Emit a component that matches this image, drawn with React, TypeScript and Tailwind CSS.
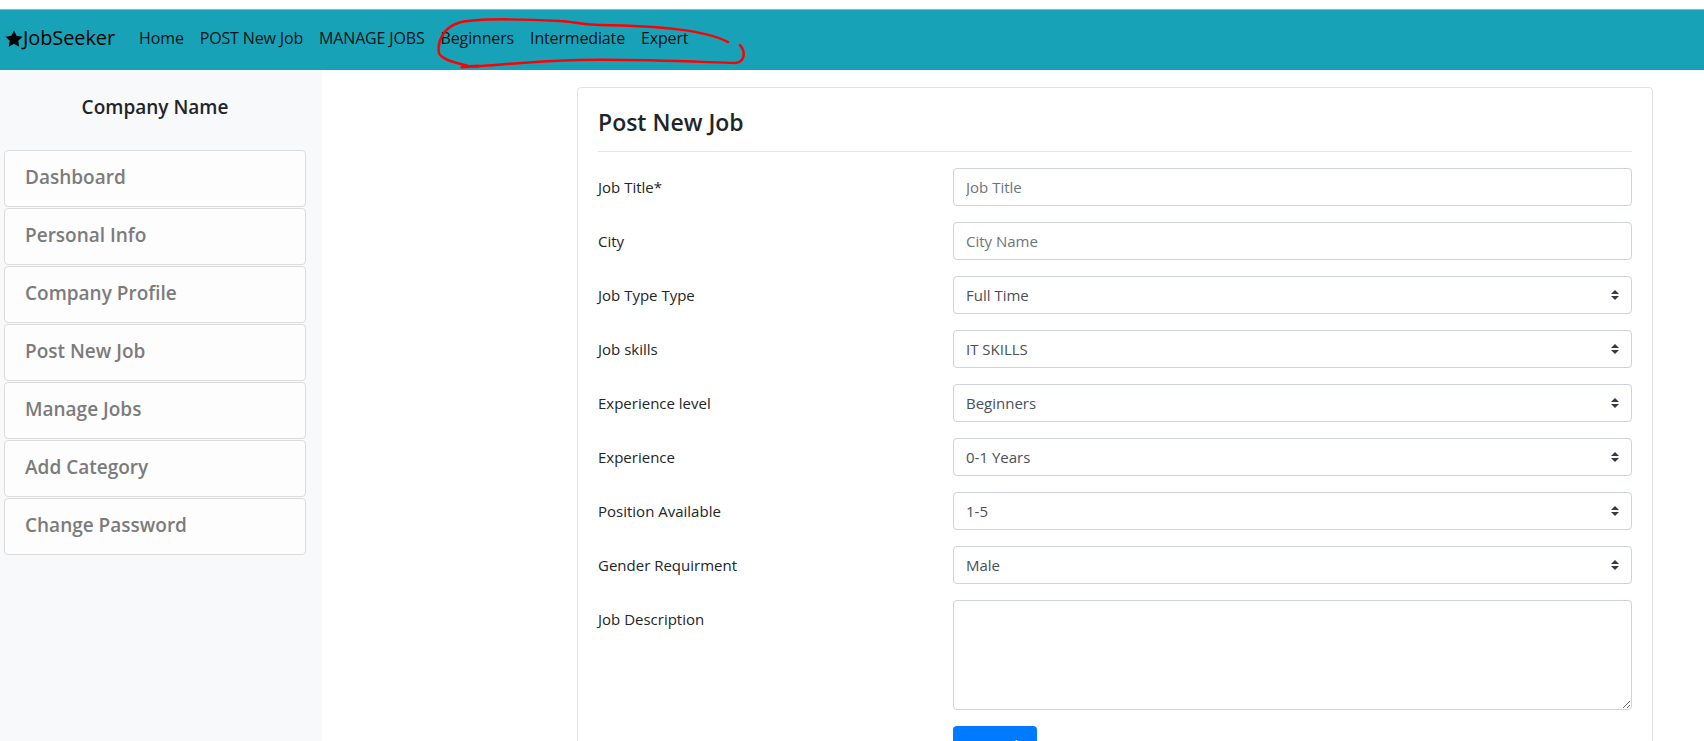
import React from "react";

function SelectArrows() {
  return (
    <svg width="8" height="10" viewBox="0 0 4 5" className="shrink-0">
      <path fill="#343a40" d="M2 0L0 2h4zm0 5L0 3h4z" />
    </svg>
  );
}

function Star() {
  return (
    <svg width="18" height="17" viewBox="0 0 24 23" className="shrink-0">
      <path
        fill="#000"
        d="M12 0.6l3.5 7.3 8 1.1-5.8 5.6 1.4 7.9L12 18.7l-7.1 3.8 1.4-7.9L0.5 9l8-1.1z"
      />
    </svg>
  );
}

const navLinks = ["Home", "POST New Job", "MANAGE JOBS", "Beginners", "Intermediate", "Expert"];
const sideItems = [
  "Dashboard",
  "Personal Info",
  "Company Profile",
  "Post New Job",
  "Manage Jobs",
  "Add Category",
  "Change Password",
];

type Field =
  | { label: string; kind: "input"; placeholder: string }
  | { label: string; kind: "select"; value: string };

const fields: Field[] = [
  { label: "Job Title*", kind: "input", placeholder: "Job Title" },
  { label: "City", kind: "input", placeholder: "City Name" },
  { label: "Job Type Type", kind: "select", value: "Full Time" },
  { label: "Job skills", kind: "select", value: "IT SKILLS" },
  { label: "Experience level", kind: "select", value: "Beginners" },
  { label: "Experience", kind: "select", value: "0-1 Years" },
  { label: "Position Available", kind: "select", value: "1-5" },
  { label: "Gender Requirment", kind: "select", value: "Male" },
];

export default function App() {
  return (
    <div className="relative min-h-screen bg-white font-['Open_Sans','Noto_Sans',sans-serif] text-[#212529]">
      {/* top strip */}
      <div className="h-[9px] bg-white" />
      <nav className="flex h-[61px] items-center border-t border-[#adadad] bg-[#17a2b8] pb-[4px] pl-[5px]">
        <a className="mr-[16px] flex items-center text-[20px] leading-none text-black">
          <Star />
          <span className="tracking-[-0.1px]">JobSeeker</span>
        </a>
        <div className="flex items-center">
          {navLinks.map((l) => (
            <span key={l} className="px-[8px] text-[16px] leading-none tracking-[-0.15px] text-black/90">
              {l}
            </span>
          ))}
        </div>
      </nav>

      <div className="flex">
        {/* sidebar */}
        <aside className="w-[322px] shrink-0 self-stretch bg-[#f8f9fa] pl-[4px] pr-[16px]">
          <div className="flex h-[80px] items-center justify-center pb-[6px] text-[19px] font-semibold">
            Company Name
          </div>
          <div className="flex flex-col gap-[1px]">
            {sideItems.map((s) => (
              <div
                key={s}
                className="flex h-[57px] items-center rounded-[4px] border border-[#dcdcdc] bg-[#fdfdfd] px-[20px] pb-[3px] text-[19px] font-semibold text-[#7b7b7b]"
              >
                {s}
              </div>
            ))}
          </div>
        </aside>

        {/* main */}
        <main className="flex-1 pl-[255px] pr-[51px] pt-[17px]">
          <div className="rounded-[4px] border border-[#dfe1e4] px-[20px] pt-[20px] pb-[20px]">
            <h4 className="text-[23px] font-semibold leading-[29px] mb-[8px]">Post New Job</h4>
            <div className="mt-[14px] mb-[16px] border-t border-[#e5e5e5]" />
            <div className="flex flex-col">
              {fields.map((f) => (
                <div key={f.label} className="mb-[16px] flex">
                  <div className="w-[355px] shrink-0 pt-[7px] text-[15px] leading-[24px]">{f.label}</div>
                  <div className="flex-1">
                    {f.kind === "input" ? (
                      <input
                        className="block h-[38px] w-full rounded-[4px] border border-[#ced4da] px-[12px] text-[15px] text-[#495057] outline-none placeholder:text-[#6c757d]"
                        placeholder={f.placeholder}
                      />
                    ) : (
                      <div className="flex h-[38px] w-full items-center justify-between rounded-[4px] border border-[#ced4da] pl-[12px] pr-[12px] text-[15px] text-[#495057]">
                        <span>{f.value}</span>
                        <SelectArrows />
                      </div>
                    )}
                  </div>
                </div>
              ))}
              <div className="mb-[16px] flex">
                <div className="w-[355px] shrink-0 pt-[7px] text-[15px] leading-[24px]">Job Description</div>
                <div className="flex-1">
                  <textarea className="block h-[110px] w-full rounded-[4px] border border-[#ced4da] px-[12px] py-[6px] text-[15px] text-[#495057] outline-none" />
                </div>
              </div>
              <div className="flex">
                <div className="w-[355px] shrink-0" />
                <div className="flex-1">
                  <button className="h-[38px] w-[84px] rounded-[4px] bg-[#007bff] text-[15px] text-white">
                    Post Job
                  </button>
                </div>
              </div>
            </div>
          </div>
        </main>
      </div>

      {/* red hand-drawn annotation */}
      <svg
        className="pointer-events-none absolute left-0 top-0"
        width="1704"
        height="80"
        viewBox="0 0 1704 80"
      >
        <path
          d="M728 42 C705 30 660 26 600 25 C578 25 572 21 560 21 C520 19 475 18 458 23 C443 28 437 42 439 53 C441 60 458 63 468 66 C480 68 520 61 580 60 C640 59 700 62 735 63 C745 62 746 52 740 45"
          fill="none"
          stroke="#ff0000"
          strokeWidth="2.5"
          strokeLinecap="round"
        />
        <path d="M462 67 L478 66" fill="none" stroke="#ff0000" strokeWidth="3" strokeLinecap="round" />
      </svg>
    </div>
  );
}
